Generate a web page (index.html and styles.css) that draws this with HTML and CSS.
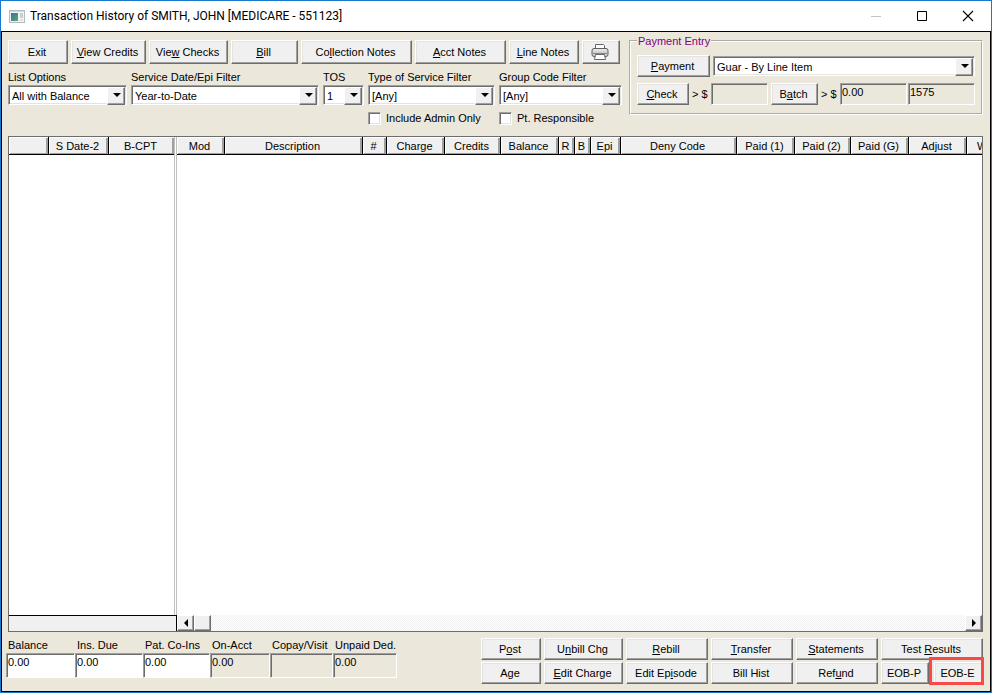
FILE: index.html
```html
<!DOCTYPE html>
<html lang="en">
<head>
<meta charset="utf-8">
<title>Transaction History</title>
<link rel="stylesheet" href="styles.css">
</head>
<body>
<header class="titlebar">
  <svg class="app-icon" width="16" height="13" viewBox="0 0 16 13" aria-hidden="true">
    <defs><linearGradient id="pane" x1="0" y1="0" x2="1" y2="1"><stop offset="0" stop-color="#3f6fa0"/><stop offset="1" stop-color="#4fae6c"/></linearGradient></defs>
    <rect x=".5" y=".5" width="15" height="12" fill="#f1f3f4" stroke="#b4b9bd"/>
    <rect x="1" y="1" width="14" height="1" fill="#d5dade"/>
    <rect x="2" y="3" width="7" height="8" fill="url(#pane)"/>
    <rect x="11" y="3" width="3" height="5" fill="#c9ced2"/>
    <rect x="11" y="9" width="3" height="2" fill="#dfe2e4"/>
  </svg>
  <h1>Transaction History of SMITH, JOHN [MEDICARE - 551123]</h1>
  <div class="window-buttons">
    <button type="button" aria-label="Minimize" disabled><svg width="12" height="12" viewBox="0 0 12 12"><path d="M1 6.5H11" stroke="#c3c3c3" fill="none"/></svg></button>
    <button type="button" aria-label="Maximize"><svg width="12" height="12" viewBox="0 0 12 12"><path d="M1.5 1.5H10.5V10.5H1.5Z" stroke="#000" fill="none"/></svg></button>
    <button type="button" aria-label="Close"><svg width="12" height="12" viewBox="0 0 12 12"><path d="M1 1L11 11M11 1L1 11" stroke="#000" stroke-width="1.1" fill="none"/></svg></button>
  </div>
</header>
<main class="client">
  <div class="top">
    <div class="controls">
      <div class="toolbar">
        <button type="button" class="btn">Exit</button>
        <button type="button" class="btn"><span><u>V</u>iew Credits</span></button>
        <button type="button" class="btn"><span>Vie<u>w</u> Checks</span></button>
        <button type="button" class="btn"><span><u>B</u>ill</span></button>
        <button type="button" class="btn"><span>Co<u>l</u>lection Notes</span></button>
        <button type="button" class="btn"><span><u>A</u>cct Notes</span></button>
        <button type="button" class="btn"><span><u>L</u>ine Notes</span></button>
        <button type="button" class="btn" aria-label="Print">
          <svg width="18" height="18" viewBox="0 0 18 18">
            <path d="M4.5 6V1.5H12.5L13.5 2.5V6" fill="#fff" stroke="#666"/>
            <rect x="1" y="5.500" width="16" height="8" rx="2" fill="#d2d2d2" stroke="#5e5e5e"/>
            <path d="M2.500 7H15.500" stroke="#f8f8f8"/>
            <path d="M2 10.500H16" stroke="#858585"/>
            <path d="M4.500 11.500H13.500L14.500 16.500H3.500Z" fill="#fff" stroke="#666"/>
          </svg>
        </button>
      </div>
      <div class="filters">
        <div class="field"><label for="list">List Options</label><div class="combo"><select id="list"><option>All with Balance</option></select></div></div>
        <div class="field"><label for="date">Service Date/Epi Filter</label><div class="combo"><select id="date"><option>Year-to-Date</option></select></div></div>
        <div class="field"><label for="tos">TOS</label><div class="combo"><select id="tos"><option>1</option></select></div></div>
        <div class="field"><label for="type">Type of Service Filter</label><div class="combo"><select id="type"><option>[Any]</option></select></div></div>
        <div class="field"><label for="group">Group Code Filter</label><div class="combo"><select id="group"><option>[Any]</option></select></div></div>
        <label class="check check-admin"><input type="checkbox">Include Admin Only</label>
        <label class="check"><input type="checkbox">Pt. Responsible</label>
      </div>
    </div>
    <fieldset class="payment">
      <legend>Payment Entry</legend>
      <div class="pay-row">
        <button type="button" class="btn btn-payment"><span><u>P</u>ayment</span></button>
        <div class="combo"><select aria-label="Payment type"><option>Guar - By Line Item</option></select></div>
      </div>
      <div class="pay-row">
        <button type="button" class="btn btn-check"><span><u>C</u>heck</span></button>
        <label for="check-amt">&gt; $</label>
        <input id="check-amt" class="sunken" type="text" readonly>
        <button type="button" class="btn btn-batch"><span>B<u>a</u>tch</span></button>
        <label for="batch-amt">&gt; $</label>
        <div class="pair">
          <input id="batch-amt" class="sunken" type="text" value="0.00" readonly>
          <input class="sunken" type="text" value="1575" aria-label="Batch number" readonly>
        </div>
      </div>
    </fieldset>
  </div>

  <section class="grid" aria-label="Transactions">
    <div class="pane pane-fixed">
      <table>
        <colgroup><col class="c40"><col class="c60"><col></colgroup>
        <thead><tr><th></th><th>S Date-2</th><th>B-CPT</th></tr></thead>
      </table>
      <div class="pane-foot"></div>
    </div>
    <div class="pane pane-scroll">
      <table class="wide">
        <colgroup><col class="c48"><col class="c138"><col class="c24"><col class="c58"><col class="c56"><col class="c58"><col class="c16"><col class="c16"><col class="c30"><col class="c116"><col class="c58"><col class="c56"><col class="c58"><col class="c58"><col class="c58"></colgroup>
        <thead><tr><th>Mod</th><th>Description</th><th>#</th><th>Charge</th><th>Credits</th><th>Balance</th><th>R</th><th>B</th><th>Epi</th><th>Deny Code</th><th>Paid (1)</th><th>Paid (2)</th><th>Paid (G)</th><th>Adjust</th><th class="cut">W</th></tr></thead>
      </table>
      <div class="scrollbar">
        <button type="button" aria-label="Scroll left"><svg width="4" height="8" viewBox="0 0 4 8"><path d="M4 0V8L0 4Z"/></svg></button>
        <div class="thumb"></div>
        <button type="button" class="end" aria-label="Scroll right"><svg width="4" height="8" viewBox="0 0 4 8"><path d="M0 0V8L4 4Z"/></svg></button>
      </div>
    </div>
  </section>

  <footer class="bottom">
    <div class="totals">
      <div><label for="t1">Balance</label><input id="t1" class="sunken edit" type="text" value="0.00"></div>
      <div><label for="t2">Ins. Due</label><input id="t2" class="sunken edit" type="text" value="0.00"></div>
      <div><label for="t3">Pat. Co-Ins</label><input id="t3" class="sunken edit" type="text" value="0.00"></div>
      <div><label for="t4">On-Acct</label><input id="t4" class="sunken" type="text" value="0.00" readonly></div>
      <div><label for="t5">Copay/Visit</label><input id="t5" class="sunken" type="text" readonly></div>
      <div><label for="t6">Unpaid Ded.</label><input id="t6" class="sunken" type="text" value="0.00" readonly></div>
    </div>
    <div class="actions">
      <button type="button" class="btn"><span>P<u>o</u>st</span></button>
      <button type="button" class="btn"><span>U<u>n</u>bill Chg</span></button>
      <button type="button" class="btn"><span><u>R</u>ebill</span></button>
      <button type="button" class="btn"><span><u>T</u>ransfer</span></button>
      <button type="button" class="btn"><span><u>S</u>tatements</span></button>
      <button type="button" class="btn"><span>Test <u>R</u>esults</span></button>
      <button type="button" class="btn"><span>A<u>g</u>e</span></button>
      <button type="button" class="btn"><span><u>E</u>dit Charge</span></button>
      <button type="button" class="btn"><span>Edit Ep<u>i</u>sode</span></button>
      <button type="button" class="btn">Bill Hist</button>
      <button type="button" class="btn"><span>Ref<u>u</u>nd</span></button>
      <div class="eob">
        <button type="button" class="btn">EOB-P</button>
        <div class="highlight"><button type="button" class="btn">EOB-E</button></div>
      </div>
    </div>
  </footer>
</main>
</body>
</html>
```
FILE: styles.css
```css
* { box-sizing: border-box; }

:root {
  --face: #f0f0f0;
  --form: #ebe7db;
  --shadow: #6d6d6d;
  --mid: #a0a0a0;
}

body {
  margin: 0;
  height: 100vh;
  display: flex;
  flex-direction: column;
  border: 1px solid #1979ca;
  background: #fff;
  color: #000;
  font: 11px/14px "Liberation Sans", Arial, sans-serif;
}

button, input, select { font: inherit; color: inherit; }

.titlebar {
  display: flex;
  align-items: center;
  height: 30px;
  padding-left: 8px;
  gap: 5px;
}
.titlebar h1 {
  flex: 1;
  margin: 0;
  font: 12px/16px Roboto, "Noto Sans", sans-serif;
}
.window-buttons { display: flex; }
.window-buttons button {
  width: 46px;
  height: 28px;
  padding: 0;
  border: 0;
  background: none;
  display: flex;
  align-items: center;
  justify-content: center;
}

.client {
  flex: 1;
  min-height: 0;
  display: flex;
  flex-direction: column;
  border: 1px solid #000;
  background: var(--form);
  padding: 0 7px 7px 6px;
}

.btn {
  display: flex;
  align-items: center;
  justify-content: center;
  height: 22px;
  padding: 0 2px 0 0;
  background: var(--face);
  border: 1px solid;
  border-color: #fff var(--shadow) var(--shadow) #fff;
  box-shadow: inset -1px -1px var(--mid), inset 1px 1px #e3e3e3;
  white-space: nowrap;
}
u { text-underline-offset: 1px; }

.top { display: flex; gap: 7px; height: 104px; }
.controls { flex: 0 0 614px; padding-top: 8px; }

.toolbar {
  display: grid;
  grid-template-columns: 60fr 75fr 79fr 67fr 111fr 91fr 70fr 38fr;
  gap: 3px;
  margin-right: 2px;
}
.toolbar .btn { height: 24px; }

.filters {
  display: grid;
  grid-template-columns: 119fr 188fr 41fr 127fr 123fr;
  column-gap: 4px;
  row-gap: 6px;
  padding-top: 6px;
}
.field label { display: block; margin-bottom: 1px; }

.combo {
  position: relative;
  height: 20px;
  background: #fff;
  border: 1px solid;
  border-color: var(--mid) #fff #fff var(--mid);
  box-shadow: inset 1px 1px var(--shadow), inset -1px -1px #e3e3e3;
}
.combo select {
  appearance: none;
  display: block;
  width: 100%;
  height: 18px;
  padding: 2px 18px 0 3px;
  border: 0;
  background: none;
}
.combo::before {
  content: "";
  position: absolute;
  top: 1px;
  right: 1px;
  width: 16px;
  height: 16px;
  background: var(--face);
  border: 1px solid;
  border-color: #fff var(--shadow) var(--shadow) #fff;
  box-shadow: inset -1px -1px var(--mid);
  pointer-events: none;
}
.combo::after {
  content: "";
  position: absolute;
  top: 7px;
  right: 5px;
  border: 4px solid transparent;
  border-top-color: #000;
  border-bottom: 0;
  pointer-events: none;
}

.check { display: flex; align-items: center; gap: 5px; }
.check-admin { grid-column: 4; }
.check input {
  appearance: none;
  width: 13px;
  height: 13px;
  margin: 0;
  background: #fff;
  border: 1px solid;
  border-color: var(--mid) #fff #fff var(--mid);
  box-shadow: inset 1px 1px var(--shadow), inset -1px -1px #e3e3e3;
}

.payment {
  flex: 1;
  min-width: 0;
  height: 81px;
  margin: 2px 0 0;
  padding: 7px 6px 0;
  border: 1px solid var(--mid);
  box-shadow: 1px 1px #fff, inset 1px 1px #fff;
  display: flex;
  flex-direction: column;
  gap: 6px;
}
.payment { border: 2px groove #fff; box-shadow: none; }
.payment legend { color: #800080; padding: 0 1px; }
.pay-row { display: flex; align-items: center; gap: 3px; }
.pay-row .combo { flex: 1; }
.pay-row .sunken { flex: 1 1 0; min-width: 0; height: 22px; }
.pay-row label { flex: 0 0 16px; }
.pair { display: flex; gap: 1px; flex: 0 0 135px; min-width: 0; }
.btn-payment { flex: 0 0 73px; }
.btn-check { flex: 0 0 52px; }
.btn-batch { flex: 0 0 47px; }

.sunken {
  background: var(--form);
  border: 1px solid;
  border-color: var(--mid) #fff #fff var(--mid);
  border-radius: 0;
  box-shadow: inset 1px 1px var(--shadow);
  padding: 0 1px 4px;
}

.grid {
  flex: 1;
  min-height: 0;
  display: flex;
  border: 1px solid var(--shadow);
  background: #fff;
}
.pane { display: flex; flex-direction: column; justify-content: space-between; }
.pane-fixed {
  flex: 0 0 168px;
  background:
    linear-gradient(#c0c0c0, #c0c0c0) 165px 0 / 1px 100% no-repeat,
    linear-gradient(#c0c0c0, #c0c0c0) 167px 0 / 1px 100% no-repeat;
}
.pane-fixed table { width: 165px; }
.pane-scroll { flex: 1; min-width: 0; overflow: hidden; }
table { table-layout: fixed; border-collapse: separate; border-spacing: 0; }
.wide { width: 808px; }
.c16 { width: 16px; }
.c24 { width: 24px; }
.c30 { width: 30px; }
.c40 { width: 40px; }
.c48 { width: 48px; }
.c56 { width: 56px; }
.c58 { width: 58px; }
.c60 { width: 60px; }
.c116 { width: 116px; }
.c138 { width: 138px; }
th {
  height: 18px;
  padding: 1px 2px 0 0;
  font-weight: normal;
  line-height: 14px;
  background: var(--face);
  border-right: 1px solid #000;
  border-bottom: 1px solid #000;
  box-shadow: inset 1px 1px #fff, inset -2px -1px var(--mid);
  white-space: nowrap;
}
.pane-fixed th:last-child { border-right: 0; }
.cut { text-align: left; padding-left: 10px; }

.pane-foot {
  height: 16px;
  background: var(--face);
  border-top: 1px solid #000;
  border-right: 1px solid #000;
}

.scrollbar {
  display: flex;
  height: 16px;
  background: repeating-conic-gradient(#fff 0 25%, #f0f0f0 0 50%) 0 0 / 2px 2px;
}
.scrollbar button, .thumb {
  width: 17px;
  height: 16px;
  padding: 0;
  display: flex;
  align-items: center;
  justify-content: center;
  background: var(--face);
  border: 1px solid;
  border-color: #fff var(--shadow) var(--shadow) #fff;
  box-shadow: inset -1px -1px var(--mid);
}
.scrollbar .end { margin-left: auto; }

.bottom {
  display: flex;
  justify-content: space-between;
  align-items: flex-start;
  padding-top: 6px;
}
.totals {
  display: grid;
  grid-template-columns: 69px 68px 67px 60px 63px 64px;
  margin-left: -2px;
}
.totals label { display: block; padding-left: 2px; white-space: nowrap; }
.totals .sunken { display: block; width: 100%; height: 25px; margin-top: 1px; padding: 0 1px 7px; }
.totals .edit { background: #fff; }

.actions {
  flex: 0 0 502px;
  display: grid;
  grid-template-columns: 60fr 79fr 82fr 82fr 82fr 102fr;
  column-gap: 3px;
  row-gap: 2px;
}
.eob { display: flex; gap: 5px; }
.eob > .btn { flex: 0 0 48px; }
.highlight { position: relative; flex: 1; }
.highlight .btn { width: 100%; }
.highlight::after {
  content: "";
  position: absolute;
  inset: -5px -1px -1px -5px;
  border: 3px solid #f84848;
  pointer-events: none;
}
```
